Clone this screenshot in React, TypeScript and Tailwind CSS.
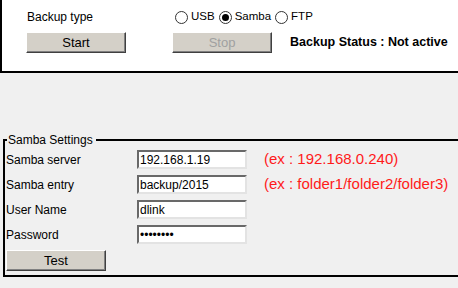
const font = "font-['Liberation_Sans','Arial',sans-serif]";

const Radio = ({ checked, label }: { checked?: boolean; label: string }) => {
  return (
    <label className="flex items-center">
      <span className="w-[13px] h-[13px] rounded-full border border-[#333] bg-white flex items-center justify-center">
        {checked && <span className="w-[7px] h-[7px] rounded-full bg-black" />}
      </span>
      <span className="ml-[3px] mr-[4px]">{label}</span>
    </label>
  );
};

const Button = ({ label, disabled, className }: { label: string; disabled?: boolean; className?: string }) => {
  return (
    <button
      className={
        "h-[21px] w-[100px] bg-[#d4d0c8] border border-t-white border-l-white border-r-[#404040] border-b-[#404040] shadow-[inset_-1px_-1px_0_#808080] text-[13px] leading-none " +
        (disabled ? "text-[#a0a0a0] " : "text-black ") +
        (className ?? "")
      }
    >
      {label}
    </button>
  );
};

const Field = ({ label, value, hint, type }: { label: string; value: string; hint?: string; type?: string }) => {
  return (
    <div className="flex items-center h-[25px]">
      <span className="w-[131px] text-[12px]">{label}</span>
      <input
        readOnly
        type={type ?? "text"}
        defaultValue={value}
        className="w-[110px] h-[19px] bg-white border-2 border-t-[#696969] border-l-[#696969] border-r-[#e3e3e3] border-b-[#e3e3e3] px-[1px] text-[12px] text-black outline-none"
      />
      {hint && <span className="ml-[17px] text-[15px] text-[#ff1a1a]">{hint}</span>}
    </div>
  );
};

export default function App() {
  return (
    <div className={"w-[458px] h-[288px] overflow-hidden bg-[#f0f0f0] text-black " + font}>
      <div className="h-[73px] bg-white border-l-2 border-b-2 border-black">
        <div className="flex items-center pt-[8px] text-[12px]">
          <span className="w-[173px] pl-[25px]">Backup type</span>
          <div className="flex items-center text-[11.5px]">
            <Radio label="USB" />
            <Radio checked label="Samba" />
            <Radio label="FTP" />
          </div>
        </div>
        <div className="flex items-center mt-[6px] pl-[24px]">
          <Button label="Start" />
          <Button label="Stop" disabled className="ml-[46px]" />
          <span className="ml-[18px] text-[12.5px] font-bold whitespace-nowrap">Backup Status : Not active</span>
        </div>
      </div>
      <fieldset className="mt-[60px] ml-[3px] w-[500px] border-2 border-black pl-px pb-[3px]">
        <legend className="ml-[1px] pl-[1px] pr-[3px] text-[12px] leading-[14px]">Samba Settings</legend>
        <div>
          <Field label="Samba server" value="192.168.1.19" hint="(ex : 192.168.0.240)" />
          <Field label="Samba entry" value="backup/2015" hint="(ex : folder1/folder2/folder3)" />
          <Field label="User Name" value="dlink" />
          <Field label="Password" value="12345678" type="password" />
          <Button label="Test" className="mt-[3px]" />
        </div>
      </fieldset>
    </div>
  );
}
